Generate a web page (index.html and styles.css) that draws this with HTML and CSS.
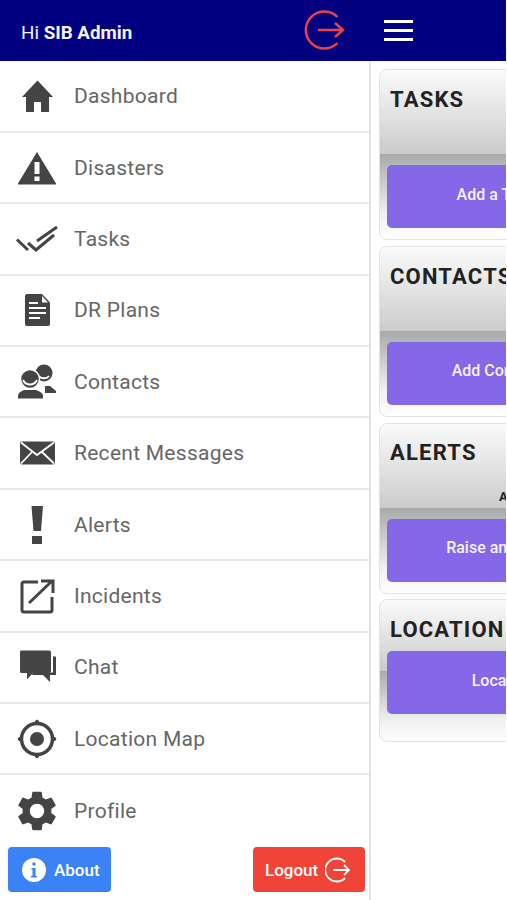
FILE: index.html
```html
<!DOCTYPE html>
<html lang="en">
<head>
<meta charset="utf-8">
<title>SIB Admin</title>
<link rel="stylesheet" href="styles.css">
</head>
<body>
<div class="app">
  <aside class="drawer">
    <header class="drawer-head">
      <div class="greeting">Hi <b>SIB Admin</b></div>
      <svg class="head-logout" viewBox="0 0 44 44"><path d="M36.500 9A18.500 18.500 0 1 0 36.500 35"/><path d="M17 22H42M34 15l8 7-8 7"/></svg>
    </header>
    <nav class="menu">
      <a class="row"><svg class="ico" viewBox="0 0 40 40"><path d="M20.500 4.500 36 21h-4v15h-8V26h-7v10H9V21H5z"/></svg><span>Dashboard</span></a>
      <a class="row"><svg class="ico" viewBox="0 0 40 40"><path d="M20 4 39 35.500a.6.6 0 0 1-.5.9H1.500a.6.6 0 0 1-.5-.9z"/><path class="knock" d="M17.500 14h5v12h-5zM17.500 28.500h5v4.500h-5z"/></svg><span>Disasters</span></a>
      <a class="row"><svg class="ico line" viewBox="0 0 40 40"><path d="M0 20.500 11 31M11 24l8 7 18-15M20 22 40 8"/></svg><span>Tasks</span></a>
      <a class="row"><svg class="ico" viewBox="0 0 40 40"><path d="M10 4h15l8 8.500V34a2 2 0 0 1-2 2H10a2 2 0 0 1-2-2V6a2 2 0 0 1 2-2z"/><path class="knock" d="M12 12h9v2h-9zM12 17h17v2H12zM12 22h17v2H12zM12 27h11v2H12zM25 6l6 6.500h-6z"/></svg><span>DR Plans</span></a>
      <a class="row"><svg class="ico" viewBox="0 0 40 40"><circle cx="27" cy="11" r="8.500"/><path class="arc" d="M22 14c2 3 8 3 10 0"/><path d="M28 24h5l6 5v2H28z"/><circle class="ring" cx="13" cy="17" r="9.500"/><path class="arc" d="M6 18c3 6 11 6 14 0"/><path d="M1 36.500v-3c0-3 5-5.500 7-5.500h10c2 0 8 2.500 8 5.500v3z"/></svg><span>Contacts</span></a>
      <a class="row"><svg class="ico" viewBox="0 0 40 40"><rect x="3" y="8.500" width="35" height="23" rx="2"/><path class="arc" d="M4 9.500 20 22 37 9.500M4 30.500 15 19M37 30.500 25 19"/></svg><span>Recent Messages</span></a>
      <a class="row"><svg class="ico" viewBox="0 0 40 40"><path d="M14.500 1h11.500l-2 25h-7.500zM15 31h10v8H15z"/></svg><span>Alerts</span></a>
      <a class="row"><svg class="ico line" viewBox="0 0 40 40"><path d="M21 6H7a2 2 0 0 0-2 2v26a2 2 0 0 0 2 2h26a2 2 0 0 0 2-2V21M12 27 35 5M24 5h12v12"/></svg><span>Incidents</span></a>
      <a class="row"><svg class="ico" viewBox="0 0 40 40"><path d="M4 3.500h28a2 2 0 0 1 2 2V24a2 2 0 0 1-2 2H16l-6 6.500V26H4a2 2 0 0 1-1-2V5.500a2 2 0 0 1 1-2z"/><path d="M36 9.500h3V28h-6v7l-7-7H15l1-2.500h20z"/></svg><span>Chat</span></a>
      <a class="row"><svg class="ico" viewBox="0 0 40 40"><circle class="stroke" cx="20" cy="20" r="15.500"/><circle cx="20" cy="20" r="7"/><path d="M18 2l2-1.500L22 2v4h-4zM18 38l2 1.500 2-1.500v-4h-4zM2 18 .5 20 2 22h4v-4zM38 18l1.500 2-1.500 2h-4v-4z"/></svg><span>Location Map</span></a>
      <a class="row"><svg class="ico" viewBox="2 2 20 20"><path d="M19.140 12.940c.04-.3.06-.61.06-.94 0-.32-.02-.64-.07-.94l2.030-1.580a.49.49 0 0 0 .12-.61l-1.920-3.320a.488.488 0 0 0-.59-.22l-2.390.96c-.5-.38-1.030-.7-1.620-.94l-.36-2.540a.484.484 0 0 0-.48-.41h-3.840c-.24 0-.43.17-.47.41l-.36 2.540c-.59.24-1.130.57-1.620.94l-2.390-.96c-.22-.08-.47 0-.59.22L2.740 8.870c-.12.21-.08.47.12.61l2.030 1.580c-.05.3-.09.63-.09.94s.02.64.07.94l-2.030 1.580a.49.49 0 0 0-.12.61l1.920 3.320c.12.22.37.29.59.22l2.390-.96c.5.38 1.030.7 1.620.94l.36 2.540c.05.24.24.41.48.41h3.840c.24 0 .44-.17.47-.41l.36-2.540c.59-.24 1.130-.56 1.620-.94l2.390.96c.22.08.47 0 .59-.22l1.920-3.320c.12-.22.07-.47-.12-.61l-2.010-1.580zM12 15.600c-1.980 0-3.600-1.620-3.600-3.600s1.620-3.600 3.600-3.600 3.600 1.620 3.600 3.600-1.620 3.600-3.600 3.600z"/></svg><span>Profile</span></a>
    </nav>
    <footer class="drawer-foot">
      <button class="btn btn-about"><svg class="btn-ico" viewBox="0 0 24 24"><circle class="info-disc" cx="12" cy="12" r="12"/><path class="info-i" d="M10.500 4.500h3v3h-3zM9.500 10h4v8h1.500v1.500H9V18h1.500v-6.500h-1z"/></svg>About</button>
      <button class="btn btn-logout">Logout<svg class="btn-ico out" viewBox="0 0 26 26"><path d="M20 5A11.500 11.500 0 1 0 20 21"/><path d="M8 13H24M19 8l5 5-5 5"/></svg></button>
    </footer>
  </aside>
  <div class="main">
    <header class="main-head">
      <div class="burger"><i></i><i></i><i></i></div>
    </header>
    <section class="cards">
      <article class="card">
        <div class="card-head"><h2>TASKS</h2></div>
        <div class="card-btn">Add a Task</div>
      </article>
      <article class="card">
        <div class="card-head"><h2>CONTACTS</h2></div>
        <div class="card-btn">Add Contact</div>
      </article>
      <article class="card">
        <div class="card-head"><h2>ALERTS</h2><p class="card-sub">A</p></div>
        <div class="card-btn">Raise an Alert</div>
      </article>
      <article class="card card-short">
        <div class="card-head"><h2>LOCATION</h2></div>
        <div class="card-btn">Locate</div>
      </article>
    </section>
  </div>
</div>
</body>
</html>
```

FILE: styles.css
```css
* { box-sizing: border-box; }
html, body { margin: 0; padding: 0; background: #fff; }
body { font-family: Roboto, "Liberation Sans", sans-serif; }
.app { display: flex; width: 506px; height: 900px; overflow: hidden; }

.drawer { flex: none; width: 371px; display: flex; flex-direction: column; border-right: 2px solid #e2e2e2; position: relative; }
.drawer-head { height: 60.500px; background: #000080; display: flex; align-items: center; justify-content: space-between; padding: 5px 26px 0 21px; flex: none; margin-right: -2px; }
.greeting { color: #f4f4ff; font-size: 18.800px; line-height: 22px; }
.greeting b { font-weight: 700; }
.head-logout { width: 44px; height: 44px; margin-top: -5px; fill: none; stroke: #ef4146; stroke-width: 2.400; overflow: visible; }

.menu { display: flex; flex-direction: column; margin-top: 1px; }
.row { display: flex; align-items: center; height: 71.400px; padding-left: 17px; border-bottom: 2px solid #e8e8e8; color: #666; font-size: 21px; letter-spacing: .27px; }
.row:last-child { border-bottom: 0; }
.row span { margin-left: 17px; }
.ico { flex: none; width: 40px; height: 40px; fill: #444; overflow: visible; }
.ico .knock { fill: #fff; }
.ico.line { fill: none; stroke: #444; stroke-width: 3; }
.ico .ring { stroke: #fff; stroke-width: 1.500; }
.ico .arc { fill: none; stroke: #fff; stroke-width: 1.800; }
.ico .stroke { fill: none; stroke: #444; stroke-width: 3.500; }

.drawer-foot { position: absolute; left: 8px; right: 4px; top: 847px; height: 45px; display: flex; justify-content: space-between; }
.btn { display: flex; align-items: center; height: 45px; border: 0; border-radius: 4px; color: #fff; font: 500 17px Roboto, sans-serif; }
.btn-about { width: 103px; background: #3b82f6; padding: 0 0 0 14px; gap: 8px; }
.btn-logout { width: 112px; background: #ef4437; padding: 0 0 0 12px; gap: 7px; }
.btn-ico { flex: none; width: 24px; height: 24px; }
.info-disc { fill: #fff; }
.info-i { fill: #3b82f6; }
.out { width: 26px; height: 26px; fill: none; stroke: #fff; stroke-width: 1.800; }

.main { flex: none; width: 135px; }
.main-head { height: 60.500px; background: #000080; padding: 20px 0 0 13px; }
.burger { width: 29px; display: flex; flex-direction: column; gap: 6px; }
.burger i { display: block; height: 3px; background: #fff; }

.cards { width: 234px; margin: 8.500px 0 0 8px; display: flex; flex-direction: column; gap: 5.800px; }
.card { height: 171px; border: 1px solid #e3e3e3; border-radius: 8px; padding: 0 7px; background: linear-gradient(#fbfbfb 0%, #cbcbcb 50%, #aaa 50%, #f0f0f0 85%, #fff 100%); }
.card-head { height: 95px; padding: 16px 3px 0; position: relative; }
.card h2 { margin: 0; font: 700 22px/28px Roboto, sans-serif; letter-spacing: 1.200px; color: #222; white-space: nowrap; }
.card-sub { margin: 22px 0 0 109px; font: 700 13px/16px Roboto, sans-serif; color: #222; }
.card-head:has(.card-sub) { padding-top: 15px; }
.card-btn { height: 63px; padding-bottom: 5px; border-radius: 5px; background: #8468e8; color: #f5f2ff; display: flex; align-items: center; justify-content: center; font-size: 16px; font-weight: 500; }
.card-short { height: 143px; }
.card-short .card-head { height: 51px; }
```
